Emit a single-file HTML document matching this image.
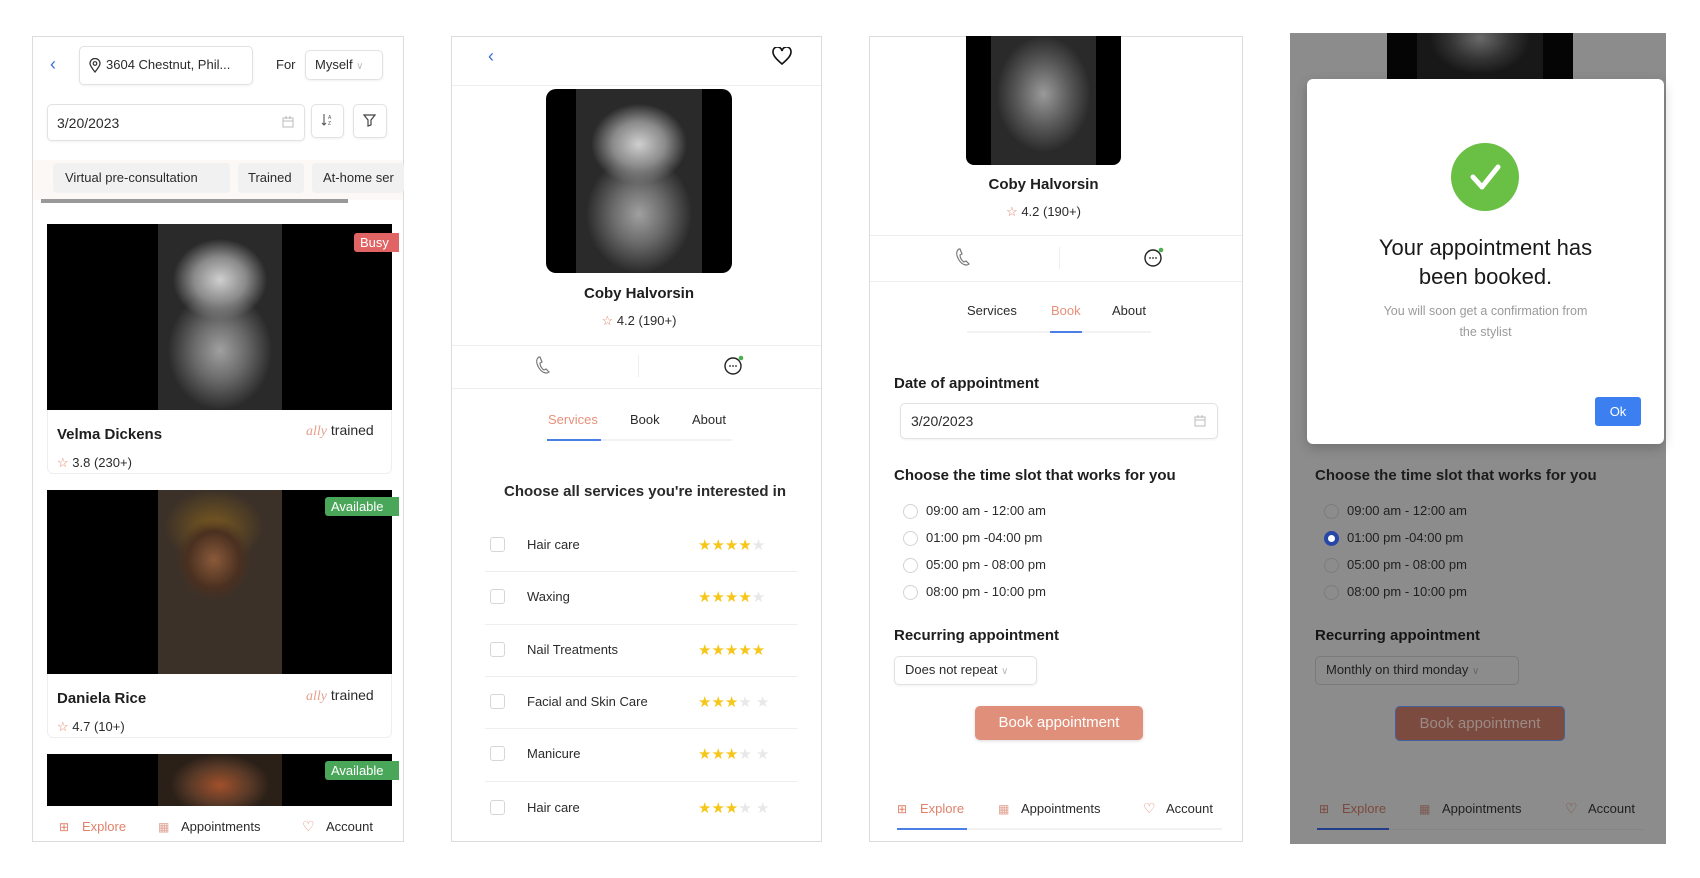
<!DOCTYPE html>
<html><head><meta charset="utf-8"><style>
*{margin:0;padding:0;box-sizing:border-box}
body{width:1700px;height:878px;background:#fff;position:relative;overflow:hidden;font-family:"Liberation Sans",sans-serif;color:#222}
.a{position:absolute}
.t{position:absolute;white-space:nowrap;line-height:16px;font-size:13px;color:#2b2b2b}
.panel{position:absolute;border:1px solid #dcdcdc;background:#fff;overflow:hidden}
.box{position:absolute;border:1px solid #e2e2e2;border-radius:5px;background:#fff;box-shadow:0 1px 2px rgba(0,0,0,.06)}
.hr{position:absolute;height:1px;background:#eee}
.photo{position:absolute;background:#000;overflow:hidden}
.face{position:absolute;top:0;bottom:0;background:radial-gradient(ellipse 38% 22% at 50% 30%,#cfcfcf,#8a8a8a 55%,transparent 100%),radial-gradient(ellipse 42% 32% at 50% 68%,#a0a0a0,#6a6a6a 50%,transparent 100%),#2a2a2a}
.b{font-weight:bold;color:#1e1e1e}
.stars{position:absolute;font-size:15px;letter-spacing:0;line-height:16px}
.y{color:#f6c619}.g{color:#e8e8e8}
.cb{position:absolute;width:15px;height:15px;border:1px solid #d6d6d6;border-radius:3px}
.rd{position:absolute;width:15px;height:15px;border:1px solid #d3d3d3;border-radius:50%;background:#fff}
.badge{position:absolute;color:#fff;font-size:13px;line-height:19px;padding:0 6px;border-radius:3px 0 0 3px}
</style></head><body>

<!-- PANEL 1 -->
<div class="panel" style="left:32px;top:36px;width:372px;height:806px"></div>
<div class="t" style="left:50px;top:56px;color:#3b6fe0;font-size:18px">‹</div>
<div class="box" style="left:79px;top:46px;width:174px;height:39px"></div>
<svg class="a" style="left:89px;top:58px" width="12" height="15" viewBox="0 0 12 15"><path d="M6 14C2 9 1 7 1 5.5a5 5 0 0 1 10 0C11 7 10 9 6 14Z" fill="none" stroke="#333" stroke-width="1.3"/><circle cx="6" cy="5.5" r="1.8" fill="none" stroke="#333" stroke-width="1.2"/></svg>
<div class="t" style="left:106px;top:57px">3604 Chestnut, Phil...</div>
<div class="t" style="left:276px;top:57px">For</div>
<div class="box" style="left:305px;top:50px;width:78px;height:30px"></div>
<div class="t" style="left:315px;top:57px">Myself <span style="color:#bbb;font-size:10px">∨</span></div>
<div class="box" style="left:47px;top:104px;width:258px;height:37px"></div>
<div class="t" style="left:57px;top:115px;font-size:14px">3/20/2023</div>
<svg class="a" style="left:282px;top:116px" width="12" height="12"><rect x="1" y="2" width="10" height="9" fill="none" stroke="#bbb"/><path d="M1 5h10M4 0v3M8 0v3" stroke="#bbb"/></svg>
<div class="box" style="left:311px;top:104px;width:33px;height:34px"></div>
<svg class="a" style="left:320px;top:113px" width="14" height="14"><path d="M4 1v11M2 10l2 2 2-2" fill="none" stroke="#555" stroke-width="1.1"/><text x="8" y="6" font-size="5" fill="#555" font-family="Liberation Sans">A</text><text x="8" y="12" font-size="5" fill="#555" font-family="Liberation Sans">Z</text></svg>
<div class="box" style="left:353px;top:104px;width:34px;height:34px"></div>
<svg class="a" style="left:363px;top:114px" width="13" height="13"><path d="M1 1h11L8 6v5L5 12V6Z" fill="none" stroke="#444" stroke-width="1.2"/></svg>
<div class="a" style="left:33px;top:160px;width:370px;height:40px;background:#fbf8f5"></div>
<div class="a" style="left:53px;top:163px;width:177px;height:30px;background:#f1f1f1;border-radius:4px"></div>
<div class="t" style="left:65px;top:170px">Virtual pre-consultation</div>
<div class="a" style="left:238px;top:163px;width:66px;height:30px;background:#f1f1f1;border-radius:4px"></div>
<div class="t" style="left:248px;top:170px">Trained</div>
<div class="a" style="left:312px;top:163px;width:92px;height:30px;background:#f1f1f1;border-radius:4px"></div>
<div class="t" style="left:323px;top:170px">At-home ser</div>
<div class="a" style="left:41px;top:199px;width:307px;height:4px;background:#999"></div>

<div class="photo" style="left:47px;top:224px;width:345px;height:186px"><div class="face" style="left:111px;width:124px"></div></div>
<div class="badge" style="left:354px;top:233px;width:45px;background:#e06464">Busy</div>
<div class="a" style="left:47px;top:410px;width:345px;height:64px;border:1px solid #eee;border-top:0;border-radius:0 0 6px 6px"></div>
<div class="t b" style="left:57px;top:427px;font-size:15px">Velma Dickens</div>
<div class="t" style="left:306px;top:422px;font-size:14px"><i style="color:#e4a08c;font-family:'Liberation Serif',serif">ally</i> trained</div>
<div class="t" style="left:57px;top:455px"><span style="color:#e0826a">☆</span> 3.8 (230+)</div>

<div class="photo" style="left:47px;top:490px;width:345px;height:184px"><div class="face" style="left:111px;width:124px;background:radial-gradient(ellipse 30% 22% at 45% 38%,#8a5a3a,#4a3020 70%,transparent),radial-gradient(ellipse 40% 20% at 45% 20%,#7a5a20,transparent),#3c3128"></div></div>
<div class="badge" style="left:325px;top:497px;width:74px;background:#4aa75a">Available</div>
<div class="a" style="left:47px;top:674px;width:345px;height:64px;border:1px solid #eee;border-top:0;border-radius:0 0 6px 6px"></div>
<div class="t b" style="left:57px;top:691px;font-size:15px">Daniela Rice</div>
<div class="t" style="left:306px;top:687px;font-size:14px"><i style="color:#e4a08c;font-family:'Liberation Serif',serif">ally</i> trained</div>
<div class="t" style="left:57px;top:719px"><span style="color:#e0826a">☆</span> 4.7 (10+)</div>

<div class="photo" style="left:47px;top:754px;width:345px;height:52px"><div class="face" style="left:111px;width:124px;background:radial-gradient(ellipse 40% 60% at 50% 60%,#a0502a,#5a3a28 60%,#2a2018),#3c3128"></div></div>
<div class="badge" style="left:325px;top:761px;width:74px;background:#4aa75a">Available</div>
<div class="t" style="left:59px;top:819px;color:#e0826a;font-size:12px">⊞</div>
<div class="t" style="left:82px;top:819px;color:#e0826a">Explore</div>
<div class="t" style="left:158px;top:819px;color:#e0a090;font-size:12px">▦</div>
<div class="t" style="left:181px;top:819px">Appointments</div>
<div class="t" style="left:302px;top:818px;color:#e0826a;font-size:14px">♡</div>
<div class="t" style="left:326px;top:819px">Account</div>

<!-- PANEL 2 -->
<div class="panel" style="left:451px;top:36px;width:371px;height:806px"></div>
<div class="t" style="left:488px;top:48px;color:#3b6fe0;font-size:18px">‹</div>
<svg class="a" style="left:772px;top:47px" width="20" height="18"><path d="M10 17C3 11 1 8 1 5a4.5 4.5 0 0 1 9-1 4.5 4.5 0 0 1 9 1c0 3-2 6-9 12Z" fill="none" stroke="#111" stroke-width="1.6"/></svg>
<div class="hr" style="left:452px;top:85px;width:369px"></div>
<div class="photo" style="left:546px;top:89px;width:186px;height:184px;border-radius:10px"><div class="face" style="left:30px;width:126px"></div></div>
<div class="t b" style="left:546px;top:286px;width:186px;text-align:center;font-size:15px">Coby Halvorsin</div>
<div class="t" style="left:546px;top:313px;width:186px;text-align:center"><span style="color:#e0826a">☆</span> 4.2 (190+)</div>
<div class="hr" style="left:452px;top:345px;width:369px"></div>
<svg class="a" style="left:535px;top:356px" width="16" height="18"><path d="M4 1C1 3 1 7 4 12s8 6 10 4l-3-3-2 1C7 13 5 10 5 7l2-1-2-5Z" fill="none" stroke="#777" stroke-width="1.2"/></svg>
<div class="a" style="left:638px;top:355px;width:1px;height:22px;background:#eee"></div>
<svg class="a" style="left:723px;top:354px" width="22" height="22"><circle cx="10" cy="12" r="8" fill="none" stroke="#222" stroke-width="1.4"/><circle cx="7" cy="12" r=".9" fill="#222"/><circle cx="10" cy="12" r=".9" fill="#222"/><circle cx="13" cy="12" r=".9" fill="#222"/><circle cx="18" cy="4" r="2.3" fill="#4caf50"/></svg>
<div class="hr" style="left:452px;top:388px;width:369px"></div>
<div class="t" style="left:548px;top:412px;color:#e8917a">Services</div>
<div class="t" style="left:630px;top:412px">Book</div>
<div class="t" style="left:692px;top:412px">About</div>
<div class="a" style="left:547px;top:439px;width:185px;height:2px;background:#f2f2f2"></div>
<div class="a" style="left:547px;top:439px;width:54px;height:2px;background:#4a7fe8"></div>
<div class="t b" style="left:460px;top:484px;width:370px;text-align:center;font-size:15px;color:#2a2a2a">Choose all services you're interested in</div>
<div class="cb" style="left:490px;top:537px"></div><div class="t" style="left:527px;top:537px">Hair care</div><div class="stars" style="left:698px;top:538px"><span class="y">★★★★</span><span class="g">★</span></div>
<div class="hr" style="left:485px;top:571px;width:312px"></div>
<div class="cb" style="left:490px;top:589px"></div><div class="t" style="left:527px;top:589px">Waxing</div><div class="stars" style="left:698px;top:590px"><span class="y">★★★★</span><span class="g">★</span></div>
<div class="hr" style="left:485px;top:624px;width:312px"></div>
<div class="cb" style="left:490px;top:642px"></div><div class="t" style="left:527px;top:642px">Nail Treatments</div><div class="stars" style="left:698px;top:643px"><span class="y">★★★★★</span></div>
<div class="hr" style="left:485px;top:676px;width:312px"></div>
<div class="cb" style="left:490px;top:694px"></div><div class="t" style="left:527px;top:694px">Facial and Skin Care</div><div class="stars" style="left:698px;top:695px"><span class="y">★★★</span><span class="g">★ ★</span></div>
<div class="hr" style="left:485px;top:728px;width:312px"></div>
<div class="cb" style="left:490px;top:746px"></div><div class="t" style="left:527px;top:746px">Manicure</div><div class="stars" style="left:698px;top:747px"><span class="y">★★★</span><span class="g">★ ★</span></div>
<div class="hr" style="left:485px;top:781px;width:312px"></div>
<div class="cb" style="left:490px;top:800px"></div><div class="t" style="left:527px;top:800px">Hair care</div><div class="stars" style="left:698px;top:801px"><span class="y">★★★</span><span class="g">★ ★</span></div>

<!-- PANEL 3 -->
<div class="panel" style="left:869px;top:36px;width:374px;height:806px"></div>
<div class="photo" style="left:966px;top:36px;width:155px;height:129px;border-radius:0 0 8px 8px"><div class="face" style="left:25px;width:105px;background:radial-gradient(ellipse 45% 45% at 50% 45%,#9a9a9a,#5a5a5a 55%,transparent),#2a2a2a"></div></div>
<div class="t b" style="left:966px;top:177px;width:195px;text-align:center;font-size:15px;margin-left:-20px">Coby Halvorsin</div>
<div class="t" style="left:946px;top:204px;width:195px;text-align:center"><span style="color:#e0826a">☆</span> 4.2 (190+)</div>
<div class="hr" style="left:870px;top:235px;width:372px"></div>
<svg class="a" style="left:955px;top:248px" width="16" height="18"><path d="M4 1C1 3 1 7 4 12s8 6 10 4l-3-3-2 1C7 13 5 10 5 7l2-1-2-5Z" fill="none" stroke="#777" stroke-width="1.2"/></svg>
<div class="a" style="left:1059px;top:247px;width:1px;height:22px;background:#eee"></div>
<svg class="a" style="left:1143px;top:246px" width="22" height="22"><circle cx="10" cy="12" r="8" fill="none" stroke="#222" stroke-width="1.4"/><circle cx="7" cy="12" r=".9" fill="#222"/><circle cx="10" cy="12" r=".9" fill="#222"/><circle cx="13" cy="12" r=".9" fill="#222"/><circle cx="18" cy="4" r="2.3" fill="#4caf50"/></svg>
<div class="hr" style="left:870px;top:281px;width:372px"></div>
<div class="t" style="left:967px;top:303px">Services</div>
<div class="t" style="left:1051px;top:303px;color:#e8917a">Book</div>
<div class="t" style="left:1112px;top:303px">About</div>
<div class="a" style="left:967px;top:331px;width:184px;height:2px;background:#f2f2f2"></div>
<div class="a" style="left:1050px;top:331px;width:32px;height:2px;background:#4a7fe8"></div>
<div class="t b" style="left:894px;top:376px;font-size:15px">Date of appointment</div>
<div class="box" style="left:900px;top:403px;width:318px;height:36px"></div>
<div class="t" style="left:911px;top:413px;font-size:14px">3/20/2023</div>
<svg class="a" style="left:1194px;top:415px" width="12" height="12"><rect x="1" y="2" width="10" height="9" fill="none" stroke="#bbb"/><path d="M1 5h10M4 0v3M8 0v3" stroke="#bbb"/></svg>
<div class="t b" style="left:894px;top:468px;font-size:15px">Choose the time slot that works for you</div>
<div class="rd" style="left:903px;top:504px"></div><div class="t" style="left:926px;top:503px">09:00 am - 12:00 am</div>
<div class="rd" style="left:903px;top:531px"></div><div class="t" style="left:926px;top:530px">01:00 pm -04:00 pm</div>
<div class="rd" style="left:903px;top:558px"></div><div class="t" style="left:926px;top:557px">05:00 pm - 08:00 pm</div>
<div class="rd" style="left:903px;top:585px"></div><div class="t" style="left:926px;top:584px">08:00 pm - 10:00 pm</div>
<div class="t b" style="left:894px;top:628px;font-size:15px">Recurring appointment</div>
<div class="box" style="left:894px;top:656px;width:143px;height:29px"></div>
<div class="t" style="left:905px;top:662px">Does not repeat <span style="color:#bbb;font-size:10px">∨</span></div>
<div class="a" style="left:975px;top:706px;width:168px;height:34px;background:#e0907a;border-radius:5px;box-shadow:0 1px 3px rgba(0,0,0,.15)"></div>
<div class="t" style="left:975px;top:715px;width:168px;text-align:center;color:#fff;font-size:15px">Book appointment</div>
<div class="t" style="left:897px;top:801px;color:#e0826a;font-size:12px">⊞</div>
<div class="t" style="left:920px;top:801px;color:#e0826a">Explore</div>
<div class="t" style="left:998px;top:801px;color:#e0a090;font-size:12px">▦</div>
<div class="t" style="left:1021px;top:801px">Appointments</div>
<div class="t" style="left:1143px;top:800px;color:#e0826a;font-size:14px">♡</div>
<div class="t" style="left:1166px;top:801px">Account</div>
<div class="a" style="left:897px;top:828px;width:325px;height:2px;background:#f2f2f2"></div>
<div class="a" style="left:897px;top:828px;width:70px;height:2px;background:#4a7fe8"></div>

<!-- PANEL 4 -->
<div class="a" style="left:1290px;top:33px;width:376px;height:811px;background:#8c8c8c"></div>
<div class="photo" style="left:1387px;top:33px;width:186px;height:46px;background:#050505"><div class="face" style="left:30px;width:126px;background:radial-gradient(ellipse 40% 80% at 50% 10%,#6a6a6a,#333 60%,#181818),#222"></div></div>
<div class="a" style="left:1307px;top:79px;width:357px;height:365px;background:#fff;border-radius:6px;box-shadow:0 4px 12px rgba(0,0,0,.2)"></div>
<div class="a" style="left:1451px;top:143px;width:68px;height:68px;border-radius:50%;background:#6abf45"></div>
<svg class="a" style="left:1451px;top:143px" width="68" height="68"><path d="M22 34l9 10 16-20" fill="none" stroke="#fff" stroke-width="5" stroke-linecap="round" stroke-linejoin="round"/></svg>
<div class="t" style="left:1307px;top:233px;width:357px;text-align:center;font-size:22px;line-height:29px;color:#1a1a1a">Your appointment has<br>been booked.</div>
<div class="t" style="left:1307px;top:301px;width:357px;text-align:center;font-size:12.5px;line-height:21px;color:#9a9a9a">You will soon get a confirmation from<br>the stylist</div>
<div class="a" style="left:1595px;top:397px;width:46px;height:29px;background:#3b7ff0;border-radius:3px"></div>
<div class="t" style="left:1595px;top:404px;width:46px;text-align:center;color:#fff">Ok</div>
<div class="t b" style="left:1315px;top:468px;font-size:15px;color:#1c1c1c">Choose the time slot that works for you</div>
<div class="rd" style="left:1324px;top:504px;background:#8c8c8c;border-color:#7c7c7c"></div><div class="t" style="left:1347px;top:503px;color:#1f1f1f">09:00 am - 12:00 am</div>
<div class="rd" style="left:1324px;top:531px;background:#fff;border:4px solid #2746a8"></div><div class="t" style="left:1347px;top:530px;color:#1f1f1f">01:00 pm -04:00 pm</div>
<div class="rd" style="left:1324px;top:558px;background:#8c8c8c;border-color:#7c7c7c"></div><div class="t" style="left:1347px;top:557px;color:#1f1f1f">05:00 pm - 08:00 pm</div>
<div class="rd" style="left:1324px;top:585px;background:#8c8c8c;border-color:#7c7c7c"></div><div class="t" style="left:1347px;top:584px;color:#1f1f1f">08:00 pm - 10:00 pm</div>
<div class="t b" style="left:1315px;top:628px;font-size:15px;color:#141414">Recurring appointment</div>
<div class="a" style="left:1315px;top:656px;width:204px;height:29px;border:1px solid #7a7a7a;border-radius:5px"></div>
<div class="t" style="left:1326px;top:662px;color:#1f1f1f">Monthly on third monday <span style="color:#666;font-size:10px">∨</span></div>
<div class="a" style="left:1395px;top:706px;width:170px;height:35px;background:#7b4b3f;border:1.5px solid #44619e;border-radius:5px"></div>
<div class="t" style="left:1395px;top:716px;width:170px;text-align:center;color:#9c8a85;font-size:15px">Book appointment</div>
<div class="t" style="left:1319px;top:801px;color:#7a4a3e;font-size:12px">⊞</div>
<div class="t" style="left:1342px;top:801px;color:#7a4a3e">Explore</div>
<div class="t" style="left:1419px;top:801px;color:#7a5a50;font-size:12px">▦</div>
<div class="t" style="left:1442px;top:801px;color:#1f1f1f">Appointments</div>
<div class="t" style="left:1565px;top:800px;color:#7a4a3e;font-size:14px">♡</div>
<div class="t" style="left:1588px;top:801px;color:#1f1f1f">Account</div>
<div class="a" style="left:1317px;top:829px;width:327px;height:1px;background:#858585"></div>
<div class="a" style="left:1317px;top:828px;width:72px;height:2px;background:#233e88"></div>
</body></html>
